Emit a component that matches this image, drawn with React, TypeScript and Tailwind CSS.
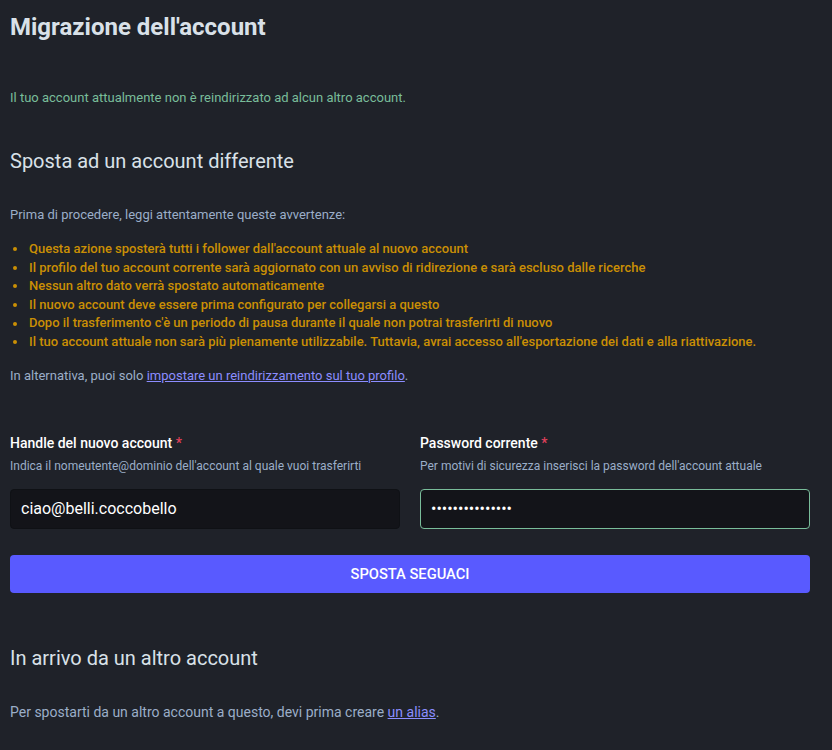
import React from "react";

const warnings = [
  "Questa azione sposterà tutti i follower dall'account attuale al nuovo account",
  "Il profilo del tuo account corrente sarà aggiornato con un avviso di ridirezione e sarà escluso dalle ricerche",
  "Nessun altro dato verrà spostato automaticamente",
  "Il nuovo account deve essere prima configurato per collegarsi a questo",
  "Dopo il trasferimento c'è un periodo di pausa durante il quale non potrai trasferirti di nuovo",
  "Il tuo account attuale non sarà più pienamente utilizzabile. Tuttavia, avrai accesso all'esportazione dei dati e alla riattivazione.",
];

const App = () => {
  return (
    <div className="min-h-[750px] bg-[#1f2229] font-['Roboto',sans-serif] text-[#d9e1e8]">
      <div className="w-[810px] pl-[10px] pb-10">
        <h2 className="pt-[12px] text-[24px] leading-[30px] font-bold text-[#d9e1e8]">
          Migrazione dell'account
        </h2>

        <p className="mt-[46px] text-[13px] leading-[20px] text-[#79bd9a]">
          Il tuo account attualmente non è reindirizzato ad alcun altro account.
        </p>

        <h3 className="mt-[39px] text-[20px] leading-[28px] text-[#d9e1e8]">
          Sposta ad un account differente
        </h3>

        <p className="mt-[30px] text-[13px] leading-[20px] text-[#9baec8]">
          Prima di procedere, leggi attentamente queste avvertenze:
        </p>

        <ul className="mt-[15px] text-[13px] leading-[18.6px] font-medium text-[#ca8f04]">
          {warnings.map((w) => (
            <li key={w} className="flex items-center">
              <span className="ml-[3px] mr-[12px] h-[4px] w-[4px] rounded-full bg-[#ca8f04]" />
              <span>{w}</span>
            </li>
          ))}
        </ul>

        <p className="mt-[14px] text-[13px] leading-[20px] text-[#9baec8]">
          In alternativa, puoi solo{" "}
          <a href="#" className="text-[#8c8dff] underline">
            impostare un reindirizzamento sul tuo profilo
          </a>
          .
        </p>

        <div className="mt-[47px] grid grid-cols-2 gap-5">
          <div>
            <label className="block text-[14px] leading-[20px] font-medium text-white">
              Handle del nuovo account <span className="text-[#df405a]">*</span>
            </label>
            <p className="mt-[5px] text-[12px] leading-[16px] text-[#9baec8]">
              Indica il nomeutente@dominio dell'account al quale vuoi trasferirti
            </p>
            <input
              type="text"
              defaultValue="ciao@belli.coccobello"
              className="mt-[15px] block h-[40px] w-full rounded-[4px] border border-[#0f1115] bg-[#131419] px-[10px] text-[16px] text-white outline-none"
            />
          </div>
          <div>
            <label className="block text-[14px] leading-[20px] font-medium text-white">
              Password corrente <span className="text-[#df405a]">*</span>
            </label>
            <p className="mt-[5px] text-[12px] leading-[16px] text-[#9baec8]">
              Per motivi di sicurezza inserisci la password dell'account attuale
            </p>
            <input
              type="password"
              defaultValue="passwordsegreta"
              className="mt-[15px] block h-[40px] w-full rounded-[4px] border border-[#79bd9a] bg-[#131419] px-[10px] text-[16px] text-white outline-none"
            />
          </div>
        </div>

        <button className="mt-[26px] block h-[38px] w-full rounded-[4px] bg-[#595aff] text-[14.7px] font-medium text-white uppercase">
          Sposta seguaci
        </button>

        <h3 className="mt-[51px] text-[20px] leading-[28px] text-[#d9e1e8]">
          In arrivo da un altro account
        </h3>

        <p className="mt-[30px] text-[14px] leading-[20px] text-[#9baec8]">
          Per spostarti da un altro account a questo, devi prima creare{" "}
          <a href="#" className="text-[#8c8dff] underline">
            un alias
          </a>
          .
        </p>
      </div>
    </div>
  );
};

export default App;
